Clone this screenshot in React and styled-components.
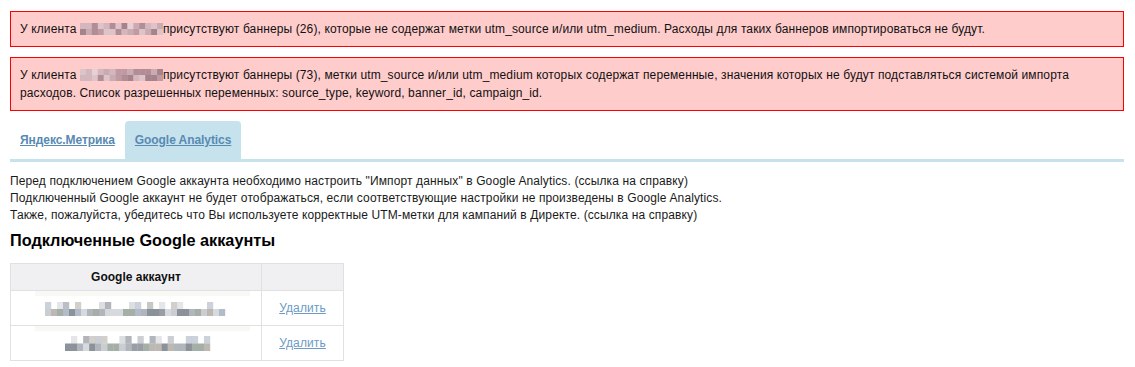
import React from 'react'
import styled, { createGlobalStyle } from 'styled-components'

const clientPalette = ['#a8868f', '#c3a7af', '#d9c3c8', '#9b7b85', '#e6d2d6', '#b8959f', '#cfb4bb']
const emailPalette = ['#8e949c', '#a9aeb6', '#c4c8cc', '#9ba69e', '#d2d6dc', '#7f868f', '#b6b0a8', '#aab4c4']

// deterministic "pixelated" blur for hidden names
const makeBlocks = (seed, cols, rows, palette, sparseTop) => {
  let s = seed
  const rnd = () => {
    s = (s * 9301 + 49297) % 233280
    return s / 233280
  }
  const out = []
  for (let r = 0; r < rows; r++) {
    for (let c = 0; c < cols; c++) {
      if (sparseTop && r === 0 && rnd() < 0.55) continue
      out.push({ r, c, fill: palette[Math.floor(rnd() * palette.length)] })
    }
  }
  return out
}

const Pixelated = ({ seed, width, height, cols, rows, palette, sparseTop, band }) => {
  const bw = width / cols
  const bh = (height - (band ? band.offset : 0)) / rows
  const top = band ? band.offset : 0
  const full = band ? band.width : width
  return (
    <svg width={full} height={height} viewBox={`0 0 ${full} ${height}`} style={{ display: 'block' }}>
      {band && <rect x="0" y="0" width={band.width} height="5" fill="#f8f8f5" />}
      {makeBlocks(seed, cols, rows, palette, sparseTop).map((b, i) => (
        <rect
          key={i}
          x={(band ? band.left : 0) + b.c * bw}
          y={top + b.r * bh}
          width={bw + 0.2}
          height={bh + 0.2}
          fill={b.fill}
          opacity={sparseTop && b.r === 0 ? 0.6 : 0.9}
        />
      ))}
    </svg>
  )
}

const ClientName = ({ seed }) => (
  <Hidden>
    <Pixelated seed={seed} width={83} height={12} cols={14} rows={2} palette={clientPalette} />
  </Hidden>
)

const App = () => (
  <>
    <GlobalStyle />
    <Page>
      <Alert>
        У клиента <ClientName seed={17} />присутствуют баннеры (26), которые не содержат метки utm_source и/или
        utm_medium. Расходы для таких баннеров импортироваться не будут.
      </Alert>
      <Alert>
        У клиента <ClientName seed={29} />присутствуют баннеры (73), метки utm_source и/или utm_medium которых
        содержат переменные, значения которых не будут подставляться системой импорта расходов. Список
        разрешенных переменных: source_type, keyword, banner_id, campaign_id.
      </Alert>

      <Tabs>
        <Tab>
          <TabLink href="#">Яндекс.Метрика</TabLink>
        </Tab>
        <Tab $active>
          <TabLink href="#">Google Analytics</TabLink>
        </Tab>
      </Tabs>

      <Info>
        <div>
          Перед подключением Google аккаунта необходимо настроить "Импорт данных" в Google Analytics. (ссылка на
          справку)
        </div>
        <div>
          Подключенный Google аккаунт не будет отображаться, если соответствующие настройки не произведены в
          Google Analytics.
        </div>
        <div>
          Также, пожалуйста, убедитесь что Вы используете корректные UTM-метки для кампаний в Директе. (ссылка на
          справку)
        </div>
      </Info>

      <Title>Подключенные Google аккаунты</Title>

      <Accounts>
        <thead>
          <tr>
            <Th $w={250}>Google аккаунт</Th>
            <Th />
          </tr>
        </thead>
        <tbody>
          <tr>
            <EmailCell>
              <EmailImage>
                <Pixelated
                  seed={41}
                  width={180}
                  height={25}
                  cols={30}
                  rows={2}
                  palette={emailPalette}
                  sparseTop
                  band={{ width: 215, offset: 11, left: 10 }}
                />
              </EmailImage>
            </EmailCell>
            <ActionCell>
              <DeleteLink href="#">Удалить</DeleteLink>
            </ActionCell>
          </tr>
          <tr>
            <EmailCell>
              <EmailImage>
                <Pixelated
                  seed={73}
                  width={145}
                  height={25}
                  cols={24}
                  rows={2}
                  palette={emailPalette}
                  sparseTop
                  band={{ width: 215, offset: 10, left: 30 }}
                />
              </EmailImage>
            </EmailCell>
            <ActionCell>
              <DeleteLink href="#">Удалить</DeleteLink>
            </ActionCell>
          </tr>
        </tbody>
      </Accounts>
    </Page>
  </>
)

export default App

const GlobalStyle = createGlobalStyle`
  body {
    margin: 0;
    background: #fff;
    color: #1a1a1a;
    font-family: "Liberation Sans", Arial, sans-serif;
    font-size: 12px;
    letter-spacing: 0.12px;
  }
`

const Page = styled.div`
  padding: 11px 11px 0 10px;
`

const Alert = styled.div`
  padding: 8px 9px;
  line-height: 18px;

  background: #ffcccc;
  border: 1px solid #ff0000;
  color: #111;

  & + & {
    margin-top: 10px;
  }
`

const Hidden = styled.span`
  display: inline-block;
  width: 83px;
  height: 12px;
  vertical-align: -2px;
`

const Tabs = styled.div`
  display: flex;
  margin-top: 10px;
  border-bottom: 3px solid #c6e2ed;
`

const Tab = styled.div`
  display: flex;
  align-items: center;
  height: 38px;
  padding: 0 10px;

  background: ${props => (props.$active ? '#c6e2ed' : 'transparent')};
  border-radius: 4px 4px 0 0;
`

const TabLink = styled.a`
  color: #588ab3;
  font-weight: bold;
  letter-spacing: -0.07px;
  text-decoration: underline;
`

const Info = styled.div`
  margin-top: 11px;
  line-height: 17px;
`

const Title = styled.h2`
  margin: 5px 0 0;

  color: #000;
  font-size: 16.3px;
  letter-spacing: 0;
  line-height: 22px;
`

const Accounts = styled.table`
  width: 334px;
  margin-top: 12px;
  table-layout: fixed;
  border-collapse: collapse;
`

const Th = styled.th`
  width: ${props => (props.$w ? `${props.$w}px` : 'auto')};
  height: 26px;
  padding: 0;

  background: #f0f0f2;
  border: 1px solid #e1e1e3;
  color: #111;
  font-weight: bold;
  letter-spacing: 0;
  text-align: center;
`

const EmailCell = styled.td`
  height: 34px;
  padding: 0;

  border: 1px solid #e1e1e3;
  vertical-align: top;
`

const EmailImage = styled.div`
  padding-left: 24px;
`

const ActionCell = styled.td`
  height: 34px;
  padding: 0;

  border: 1px solid #e1e1e3;
  text-align: center;
`

const DeleteLink = styled.a`
  color: #6b9bc6;
  text-decoration: underline;
`
